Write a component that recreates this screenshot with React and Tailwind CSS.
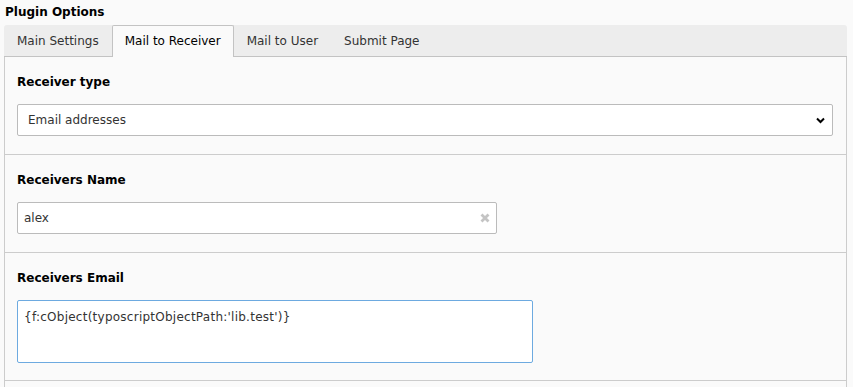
import { useState } from "react";

const tabs = ["Main Settings", "Mail to Receiver", "Mail to User", "Submit Page"];

function Section({ label, children }) {
  return (
    <div className="border-b border-[#cccccc] px-3 pt-[18px] pb-[18px]">
      <div className="mb-[14px] text-[12px] leading-[15px] font-bold text-black">
        {label}
      </div>
      {children}
    </div>
  );
}

export default function App() {
  const [active, setActive] = useState(1);
  const [name, setName] = useState("alex");
  const [email, setEmail] = useState("{f:cObject(typoscriptObjectPath:'lib.test')}");

  return (
    <div className="h-[387px] overflow-hidden bg-[#fafafa] font-['DejaVu_Sans',Verdana,sans-serif] text-[#333]">
      <div className="pt-[4px] pr-[6px] pl-[4px]">
        <h2 className="h-[21px] pl-px text-[12px] leading-[16px] font-bold text-black">
          Plugin Options
        </h2>

        {/* tabs */}
        <div className="flex h-[32px] rounded-t-[3px] border-b border-[#c3c3c3] bg-[#ededed]">
          {tabs.map((tab, i) => (
            <button
              key={tab}
              onClick={() => setActive(i)}
              className={
                "-mb-px px-3 text-[12px] leading-[31px] " +
                (i === active
                  ? "rounded-t-[2px] border border-b-0 border-[#c3c3c3] bg-[#fafafa] text-black"
                  : "border border-b-0 border-transparent text-[#333]")
              }
            >
              {tab}
            </button>
          ))}
        </div>

        {/* panel */}
        <div className="h-[400px] border-x border-[#cccccc] bg-[#fafafa]">
          <Section label="Receiver type">
            <div className="relative w-[816px]">
              <select className="h-[32px] w-full appearance-none rounded-[2px] border border-[#bbbbbb] bg-white pl-[10px] text-[12px] text-[#333] outline-none">
                <option>Email addresses</option>
              </select>
              <svg
                className="pointer-events-none absolute top-[13px] right-[8px]"
                width="9"
                height="7"
                viewBox="0 0 9 7"
              >
                <path d="M1 1.5 L4.5 5 L8 1.5" fill="none" stroke="#000" strokeWidth="2" />
              </svg>
            </div>
          </Section>

          <Section label="Receivers Name">
            <div className="relative w-[480px]">
              <input
                value={name}
                onChange={(e) => setName(e.target.value)}
                className="h-[32px] w-full rounded-[2px] border border-[#bbbbbb] bg-white pl-[6px] text-[12px] text-[#333] outline-none"
              />
              <svg
                className="absolute top-[11px] right-[7px]"
                width="10"
                height="10"
                viewBox="0 0 10 10"
              >
                <path d="M1.5 1.5 L8.5 8.5 M8.5 1.5 L1.5 8.5" stroke="#c4c4c4" strokeWidth="2.8" />
              </svg>
            </div>
          </Section>

          <Section label="Receivers Email">
            <textarea
              value={email}
              onChange={(e) => setEmail(e.target.value)}
              className="-mb-px block h-[63px] w-[516px] resize-none rounded-[2px] border border-[#6daae0] bg-white px-[6px] pt-[8px] text-[12px] leading-[16px] tracking-[0.25px] text-[#333] outline-none"
            />
          </Section>
        </div>
      </div>
    </div>
  );
}
